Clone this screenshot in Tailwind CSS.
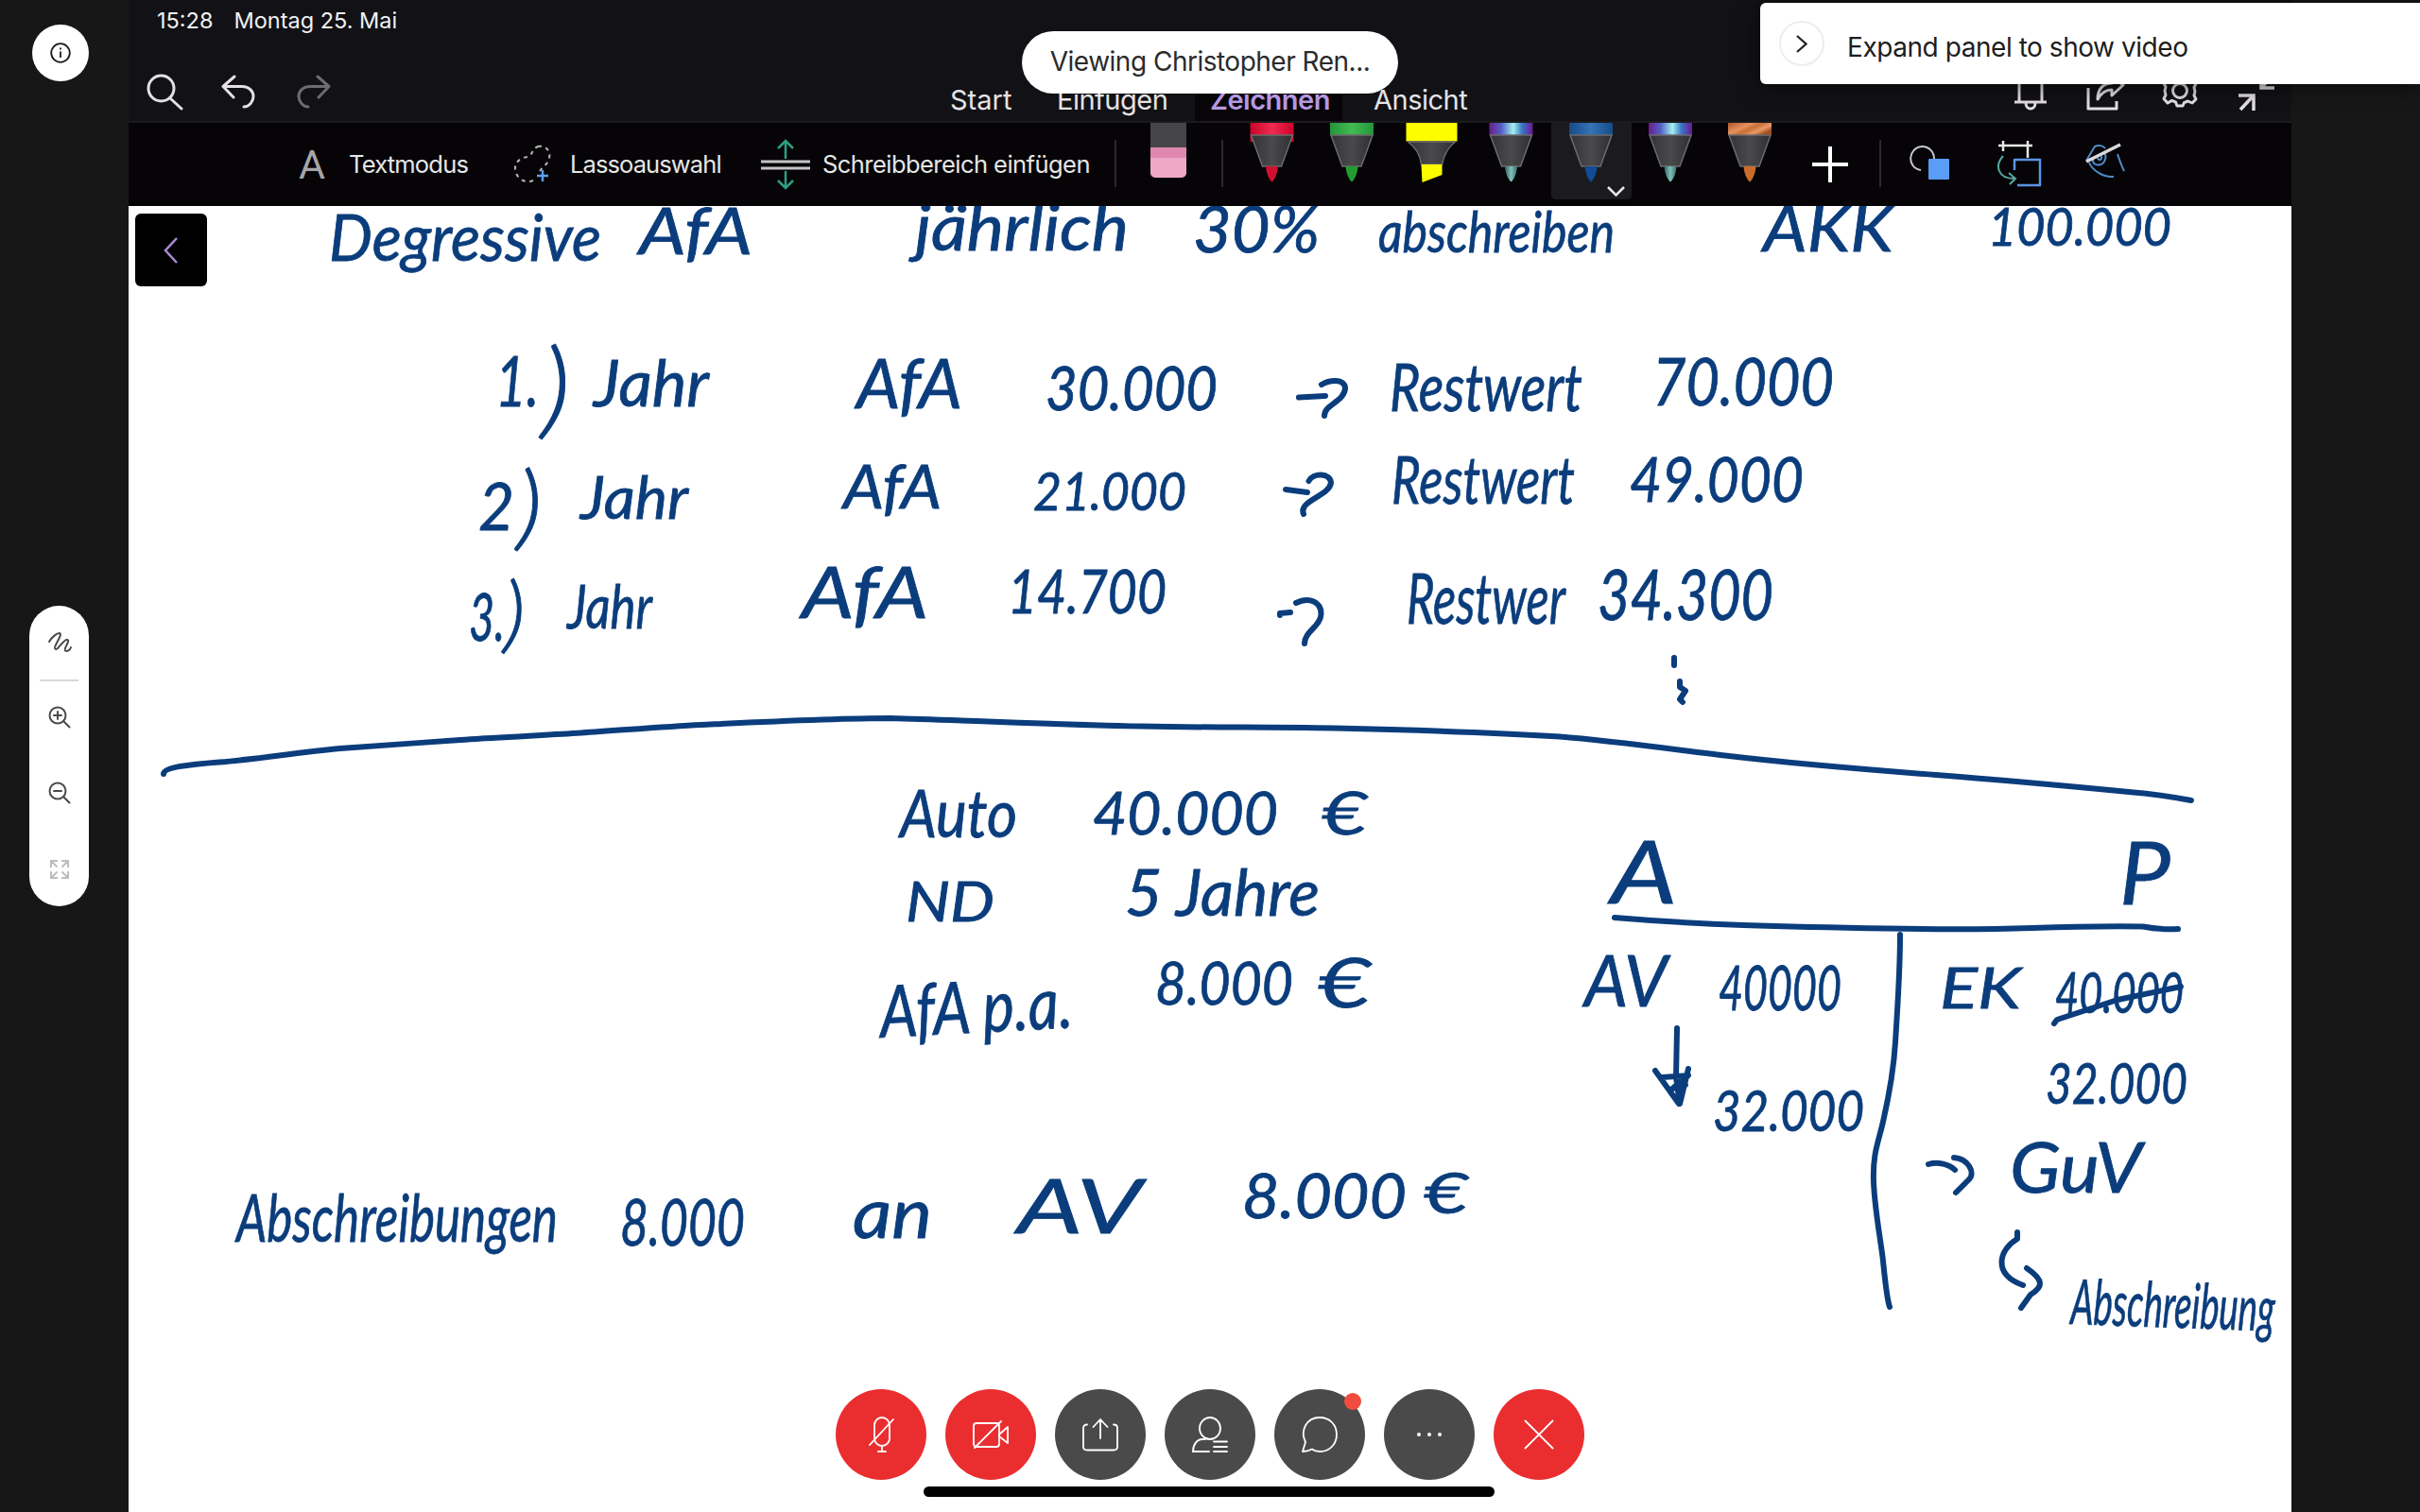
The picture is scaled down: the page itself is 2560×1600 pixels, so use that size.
<!DOCTYPE html>
<html lang="de">
<head>
<meta charset="utf-8">
<title>Meeting</title>
<script src="https://cdn.jsdelivr.net/npm/@tailwindcss/browser@4"></script>
</head>
<body class="bg-[#171717]">
<div class="relative flex h-[1600px] w-[2560px] overflow-hidden bg-[#171717] font-['Inter',sans-serif]">
  <div class="w-[136px] shrink-0"></div>

  <main class="flex w-[2288px] shrink-0 flex-col bg-white">
    <header class="flex h-[128px] shrink-0 flex-col bg-[#121115] text-[#e4e3e6]">
      <div class="flex h-[44px] items-center gap-[22px] pl-[30px] text-[23.5px] leading-none text-[#f2f2f2]">
        <span>15:28</span><span>Montag 25. Mai</span>
      </div>
      <div class="flex h-[84px] items-stretch">
        <div class="flex w-[842px] items-start gap-[40px] pl-[18px] pt-[33px]">
          <svg class="h-[40px] w-[40px]" viewBox="0 0 40 40" fill="none" stroke="#e4e0e6" stroke-width="3" stroke-linecap="round"><circle cx="16.500" cy="16.500" r="13.500"/><path d="M26 27L38 38"/></svg>
          <svg class="h-[40px] w-[38px]" viewBox="0 0 38 40" fill="none" stroke="#e4e0e6" stroke-width="3" stroke-linecap="round" stroke-linejoin="round"><path d="M14 4L2 14.500L13 26M2 14.500H22C30 14.500 34 20 34 25S30 36 24 36"/></svg>
          <svg class="h-[40px] w-[38px]" viewBox="0 0 38 40" fill="none" stroke="#6d6c70" stroke-width="3" stroke-linecap="round" stroke-linejoin="round"><path d="M24 4L36 14.500L25 26M36 14.500H16C8 14.500 4 20 4 25S8 36 14 36"/></svg>
        </div>
        <nav class="flex items-stretch text-[29px] leading-none tracking-[-0.5px]">
          <span class="flex w-[140px] items-center pl-[27px] pt-[38px] tracking-normal">Start</span>
          <span class="flex w-[146px] items-center pt-[38px]">Einfügen</span>
          <span class="flex w-[156px] items-center bg-[#070508] pl-[16px] pt-[38px] font-semibold text-[#b698e2]">Zeichnen</span>
          <span class="flex items-center pl-[33px] pt-[38px]">Ansicht</span>
        </nav>
        <div class="ml-auto flex items-start gap-[38px] pr-[16px] pt-[32px]">
          <svg class="h-[42px] w-[40px]" viewBox="0 0 40 42" fill="none" stroke="#e4e0e6" stroke-width="3"><path d="M8 32V14C8 7 13 3 20 3S32 7 32 14V32M3 32H37M15 33C15 41 25 41 25 33"/></svg>
          <svg class="h-[42px] w-[42px]" viewBox="0 0 42 42" fill="none" stroke="#e4e0e6" stroke-width="3" stroke-linejoin="round"><path d="M3 17V39H33V31M13 29C13 18 19 12 28 12V5L40 14L28 25V19C21 19 17 22 13 29Z"/></svg>
          <svg class="h-[42px] w-[40px]" viewBox="0 0 40 42" fill="none" stroke="#e4e0e6" stroke-width="3"><circle cx="20" cy="20" r="7.500"/><path stroke-linejoin="round" d="M17 4h6l1.500 4.500 4 1.600L33 8l4 4.500-2 4L36 21l-1 4 2 4-4 4-4.500-2-4 1.600L23 36h-6l-1.500-4-4-1.600L7 33l-4-4.500 2-4L4 20l1-4-2-4L7 8l4.500 2 4-1.500Z"/></svg>
          <svg class="h-[42px] w-[44px]" viewBox="0 0 44 42" fill="none" stroke="#e4e0e6" stroke-width="3.500"><path d="M4 25H20V41M20 25L6 40M42 17H28V3M28 17L41 3"/></svg>
        </div>
      </div>
    </header>

    <section class="flex h-[90px] shrink-0 items-stretch border-t-2 border-[#1b1a1d] bg-[#060407] text-[25.5px] leading-none tracking-[-0.7px] text-[#e6e6e6]">
      <div class="flex w-[233px] items-center pl-[180px] font-['Roboto',sans-serif] text-[43px] text-[#a6a5a8]">A</div>
      <div class="flex w-[171px] items-center tracking-[-0.8px]">Textmodus</div>
      <div class="flex w-[63px] items-center">
        <svg class="h-[48px] w-[48px]" viewBox="0 0 48 48" fill="none"><path d="M29 5C37 3 43 10 41 17C39 25 34 26 31 31M24 41C15 45 6 38 5 30C4 21 11 17 18 16C24 14 22 8 29 5" stroke="#b5b5b5" stroke-width="2" stroke-dasharray="4 4.500"/><path d="M34 30V42M28 36H40" stroke="#5c9df0" stroke-width="2.500"/></svg>
      </div>
      <div class="flex w-[200px] items-center tracking-[-0.9px]">Lassoauswahl</div>
      <div class="flex w-[67px] items-center">
        <svg class="h-[58px] w-[56px]" viewBox="0 0 56 58" fill="none"><path d="M2 26H54M2 33H54" stroke="#c4c3c6" stroke-width="3"/><path d="M28 23V4M20 12L28 4L36 12M28 36V54M20 46L28 54L36 46" stroke="#2ba084" stroke-width="2.500"/></svg>
      </div>
      <div class="flex w-[309px] items-center tracking-[-0.55px]">Schreibbereich einfügen</div>
      <div class="mt-[18px] h-[50px] w-[2px] bg-[#2b292d]"></div>
      <div class="ml-[36px] w-[38px]">
        <div class="h-[26px] bg-[#454447]"></div>
        <div class="h-[11px] bg-[#e087b0]"></div>
        <div class="h-[21px] rounded-b-[5px] bg-[#eea8c8]"></div>
      </div>
      <div class="ml-[37px] mt-[18px] h-[50px] w-[2px] bg-[#2b292d]"></div>

      <svg class="h-[88px] w-[597px] shrink-0" viewBox="1293 130 597 88">
        <defs>
          <linearGradient id="body"><stop offset="0" stop-color="#333234"/><stop offset=".5" stop-color="#4a494b"/><stop offset="1" stop-color="#2f2e30"/></linearGradient>
          <linearGradient id="red"><stop stop-color="#c80428"/><stop offset=".5" stop-color="#f02a50"/><stop offset="1" stop-color="#cc0229"/></linearGradient>
          <linearGradient id="green"><stop stop-color="#21963a"/><stop offset=".5" stop-color="#44ba52"/><stop offset="1" stop-color="#22963a"/></linearGradient>
          <linearGradient id="blue"><stop stop-color="#164a88"/><stop offset=".5" stop-color="#3574b6"/><stop offset="1" stop-color="#174b8a"/></linearGradient>
          <linearGradient id="galaxy"><stop stop-color="#6b1c8c"/><stop offset=".28" stop-color="#5361c8"/><stop offset=".55" stop-color="#a5f0ee"/><stop offset=".75" stop-color="#3978c5"/><stop offset="1" stop-color="#6c1594"/></linearGradient>
          <linearGradient id="teal"><stop stop-color="#32656a"/><stop offset=".5" stop-color="#7ec0b4"/><stop offset="1" stop-color="#3e6a76"/></linearGradient>
          <linearGradient id="copper" x2="1" y2=".6"><stop stop-color="#b05426"/><stop offset=".4" stop-color="#e59260"/><stop offset=".6" stop-color="#cb6d36"/><stop offset=".8" stop-color="#e99b6c"/><stop offset="1" stop-color="#a54c20"/></linearGradient>
          <path id="cone" d="M-22 143H22L10 176H-10Z" fill="url(#body)" stroke="#6c6b6e" stroke-width="1.500"/>
          <path id="tip" d="M-6.500 176H6.500C6 184 3 190 0 192.500C-3 190 -6 184 -6.500 176Z"/>
        </defs>
        <path d="M1640 130H1725V206Q1725 211 1720 211H1645Q1640 211 1640 206Z" fill="#1b1a1d"/>
        <g transform="translate(1344.500 0)"><rect x="-23" y="130" width="46" height="20" y2="0" fill="url(#red)"/><use href="#cone"/><use href="#tip" fill="#d01030"/></g>
        <g transform="translate(1429 0)"><rect x="-23" y="130" width="46" height="13" fill="url(#green)"/><use href="#cone"/><use href="#tip" fill="#239a32"/></g>
        <g transform="translate(1513.500 0)"><rect x="-27" y="130" width="54" height="19.500" fill="#fdfd00"/><path d="M-25 150H25C17 156 13 164 11 174H-11C-12 164 -17 156 -25 150Z" fill="url(#body)" stroke="#6c6b6e" stroke-width="1.500"/><path d="M-11 174H11V185L-10 193Z" fill="#fdfd00"/></g>
        <g transform="translate(1597.500 0)"><rect x="-23" y="130" width="46" height="13" fill="url(#galaxy)"/><use href="#cone"/><use href="#tip" fill="url(#teal)"/></g>
        <g transform="translate(1682 0)"><rect x="-23" y="130" width="46" height="13" fill="url(#blue)"/><use href="#cone"/><use href="#tip" fill="#114c94"/></g>
        <path d="M1700 198L1708.500 206.500L1717 198" fill="none" stroke="#e8e8e8" stroke-width="2.500"/>
        <g transform="translate(1766 0)"><rect x="-23" y="130" width="46" height="13" fill="url(#galaxy)"/><use href="#cone"/><use href="#tip" fill="url(#teal)"/></g>
        <g transform="translate(1850 0)"><rect x="-23" y="130" width="46" height="13" fill="url(#copper)"/><use href="#cone"/><use href="#tip" fill="#cb6c2c"/></g>
      </svg>
      <div class="ml-[25px] flex w-[40px] items-center">
        <svg class="h-[40px] w-[40px] shrink-0" viewBox="0 0 40 40" stroke="#fff" stroke-width="4"><path d="M20 1V39M1 20H39"/></svg>
      </div>
      <div class="ml-[32px] mt-[18px] h-[50px] w-[2px] bg-[#2b292d]"></div>
      <svg class="ml-[30px] mt-[22px] h-[42px] w-[46px]" viewBox="0 0 46 42" fill="none"><path d="M12 28C-4 25 -1 4 13 3C21 3 26 9 26 16" stroke="#c9c8cb" stroke-width="2"/><rect x="20" y="16" width="22" height="22" rx="1" fill="#5b9cf6"/></svg>
      <svg class="ml-[45px] mt-[17px] h-[52px] w-[50px]" viewBox="0 0 50 52" fill="none"><path d="M3 7H39M8 2V13M34 2V20" stroke="#e8e8e8" stroke-width="2.500"/><path d="M8 18C-1 28 2 42 20 42M14 36L21 42L15 48" stroke="#58a8a0" stroke-width="2"/><path d="M20 33V22H47V49H23" stroke="#5b94e6" stroke-width="2.500" stroke-linejoin="round"/></svg>
      <svg class="ml-[44px] mt-[21px] h-[40px] w-[46px]" viewBox="0 0 46 40" fill="none"><path d="M2 19L11 4C15 2 20 3 22 6M35 12C37 18 39 24 42 30M5 21C8 29 20 37 31 36M9 17C8 24 17 26 21 20C23 16 23 13 21 11M14 16C15 20 19 18 18 14" stroke="#4f8cc8" stroke-width="2"/><path d="M2 20L38 2" stroke="#d9d9dc" stroke-width="3.500"/></svg>
    </section>

    <!-- Notebook page: ink on a free canvas -->
    <section class="relative min-h-0 flex-1 overflow-hidden bg-white">
      <svg class="block h-[1382px] w-[2288px]" viewBox="136 218 2288 1382">
        <g class="font-['Lato',sans-serif] italic" fill="#0b3d7c" stroke="#0b3d7c" stroke-width="0.800">
          <g font-size="68">
            <text x="348" y="276" textLength="288" lengthAdjust="spacingAndGlyphs">Degressive</text>
            <text x="676" y="269" textLength="120" lengthAdjust="spacingAndGlyphs">AfA</text>
            <text x="968" y="265" textLength="226" lengthAdjust="spacingAndGlyphs">jährlich</text>
            <text x="1262" y="267" textLength="134" lengthAdjust="spacingAndGlyphs">30%</text>
            <text x="1458" y="267" font-size="60" textLength="250" lengthAdjust="spacingAndGlyphs">abschreiben</text>
            <text x="1865" y="266" textLength="138" lengthAdjust="spacingAndGlyphs">AKK</text>
            <text x="2103" y="260" font-size="56" textLength="194" lengthAdjust="spacingAndGlyphs">100.000</text>

            <text x="524" y="430" font-size="74" textLength="46" lengthAdjust="spacingAndGlyphs">1.</text>
            <text x="572" y="450" class="font-light" font-size="112" textLength="32" lengthAdjust="spacingAndGlyphs">)</text>
            <text x="628" y="430" textLength="122" lengthAdjust="spacingAndGlyphs">Jahr</text>
            <text x="906" y="432" font-size="72" textLength="112" lengthAdjust="spacingAndGlyphs">AfA</text>
            <text x="1106" y="434" font-size="64" textLength="182" lengthAdjust="spacingAndGlyphs">30.000</text>
            <text x="1470" y="435" font-size="70" textLength="204" lengthAdjust="spacingAndGlyphs">Restwert</text>
            <text x="1748" y="429" font-size="70" textLength="192" lengthAdjust="spacingAndGlyphs">70.000</text>

            <text x="506" y="561" font-size="70" textLength="38" lengthAdjust="spacingAndGlyphs">2</text>
            <text x="546" y="570" class="font-light" font-size="98" textLength="28" lengthAdjust="spacingAndGlyphs">)</text>
            <text x="614" y="549" font-size="62" textLength="114" lengthAdjust="spacingAndGlyphs">Jahr</text>
            <text x="892" y="538" font-size="64" textLength="104" lengthAdjust="spacingAndGlyphs">AfA</text>
            <text x="1093" y="540" font-size="56" textLength="162" lengthAdjust="spacingAndGlyphs">21.000</text>
            <text x="1472" y="533" font-size="70" textLength="194" lengthAdjust="spacingAndGlyphs">Restwert</text>
            <text x="1724" y="531" font-size="66" textLength="184" lengthAdjust="spacingAndGlyphs">49.000</text>

            <text x="496" y="678" font-size="70" textLength="38" lengthAdjust="spacingAndGlyphs">3.</text>
            <text x="532" y="680" class="font-light" font-size="88" textLength="24" lengthAdjust="spacingAndGlyphs">)</text>
            <text x="600" y="665" font-size="64" textLength="90" lengthAdjust="spacingAndGlyphs">Jahr</text>
            <text x="848" y="654" font-size="76" textLength="134" lengthAdjust="spacingAndGlyphs">AfA</text>
            <text x="1066" y="649" font-size="64" textLength="168" lengthAdjust="spacingAndGlyphs">14.700</text>
            <text x="1488" y="660" font-size="74" textLength="168" lengthAdjust="spacingAndGlyphs">Restwer</text>
            <text x="1690" y="656" font-size="74" textLength="186" lengthAdjust="spacingAndGlyphs">34.300</text>

            <text x="952" y="886" font-size="70" textLength="124" lengthAdjust="spacingAndGlyphs">Auto</text>
            <text x="1156" y="883" font-size="62" textLength="196" lengthAdjust="spacingAndGlyphs">40.000</text>
            <text x="1398" y="883" font-size="62" textLength="48" lengthAdjust="spacingAndGlyphs">€</text>
            <text x="958" y="975" font-size="58" textLength="94" lengthAdjust="spacingAndGlyphs">ND</text>
            <text x="1190" y="969" font-size="68" textLength="206" lengthAdjust="spacingAndGlyphs">5 Jahre</text>
            <text transform="translate(932 1098) rotate(-3)" font-size="76" textLength="204" lengthAdjust="spacingAndGlyphs">AfA p.a.</text>
            <text x="1222" y="1063" font-size="62" textLength="146" lengthAdjust="spacingAndGlyphs">8.000</text>
            <text x="1394" y="1066" font-size="72" textLength="56" lengthAdjust="spacingAndGlyphs">€</text>

            <text x="250" y="1314" font-size="70" textLength="340" lengthAdjust="spacingAndGlyphs">Abschreibungen</text>
            <text x="656" y="1318" font-size="68" textLength="132" lengthAdjust="spacingAndGlyphs">8.000</text>
            <text x="902" y="1310" font-size="74" textLength="84" lengthAdjust="spacingAndGlyphs">an</text>
            <text x="1076" y="1305" font-size="80" textLength="132" lengthAdjust="spacingAndGlyphs">AV</text>
            <text x="1314" y="1289" font-size="66" textLength="174" lengthAdjust="spacingAndGlyphs">8.000</text>
            <text x="1506" y="1284" font-size="60" textLength="47" lengthAdjust="spacingAndGlyphs">€</text>

            <text x="1704" y="956" font-size="92" textLength="70" lengthAdjust="spacingAndGlyphs">A</text>
            <text x="2242" y="957" font-size="92" textLength="54" lengthAdjust="spacingAndGlyphs">P</text>
            <text x="1676" y="1065" font-size="76" textLength="88" lengthAdjust="spacingAndGlyphs">AV</text>
            <text x="1818" y="1069" font-size="66" textLength="130" lengthAdjust="spacingAndGlyphs">40000</text>
            <text x="1812" y="1197" font-size="60" textLength="160" lengthAdjust="spacingAndGlyphs">32.000</text>
            <text x="2052" y="1067" font-size="60" textLength="86" lengthAdjust="spacingAndGlyphs">EK</text>
            <text x="2174" y="1072" font-size="60" textLength="136" lengthAdjust="spacingAndGlyphs">40.000</text>
            <text x="2164" y="1168" font-size="60" textLength="150" lengthAdjust="spacingAndGlyphs">32.000</text>
            <text x="2126" y="1262" font-size="74" textLength="140" lengthAdjust="spacingAndGlyphs">GuV</text>
            <text transform="translate(2190 1401) rotate(2)" font-size="66" textLength="216" lengthAdjust="spacingAndGlyphs">Abschreibung</text>
          </g>
        </g>
        <g fill="none" stroke="#0b3d7c" stroke-width="6" stroke-linecap="round" stroke-linejoin="round">
          <path d="M173 819C173 812 200 809 232 806.500C275 803 315 796 360 792C400 789 445 786 487 783S575 778 615 775.500S700 769 742 767S880 760 942 760C1020 762 1120 767 1207 768.600S1340 769 1411 770.600S1560 774 1650 779.600C1705 784 1770 793 1829 800S1970 814 2048 820S2190 832 2252 838Q2288 841 2318 847"/>
          <path d="M1708 971Q1780 977 1844 979T1997 982.600T2150 982T2267 980.500Q2285 984 2304 983"/>
          <path d="M2010 989C2010 1030 2007 1070 2005 1103S1997 1165 1992 1187S1981 1220 1982 1250S1990 1315 1992 1334.500S1996 1375 1999 1383"/>
          <path d="M2173 1083L2176 1079L2240 1058L2307 1044"/>
          <path d="M1774 1088L1773 1140L1777 1168L1786 1131M1751 1133L1776 1168M1758 1140L1786 1138L1769 1152L1783 1148"/>
          <path d="M1374 420.500L1402 419M1398 407C1406 402 1423 400 1423 411C1422 425 1401 428 1401 440"/>
          <path d="M1360 518L1383 521M1384.500 509C1389 500 1407 500 1408 511C1406 525 1373 530 1379 544"/>
          <path d="M1354 651V649L1365 648M1371 638C1385 631 1398 637 1397.500 650C1397 663 1380 668 1380 681"/>
          <path d="M2040 1232C2050 1229 2062 1232 2068 1238M2067 1225C2082 1226 2090 1241 2083 1248L2069 1262"/>
          <path d="M2134 1304V1311C2115 1322 2107 1348 2140 1360M2144 1342C2163 1355 2161 1362 2148 1370L2138 1384"/>
          <path d="M1771 696V704M1777 721V727L1783 731L1777 740L1780 743"/>
        </g>
      </svg>
      <div class="absolute left-[7px] top-[8px] flex h-[77px] w-[76px] items-center justify-center rounded-[6px] bg-black">
        <svg class="h-[28px] w-[16px]" viewBox="0 0 16 28" fill="none" stroke="#a98bd2" stroke-width="2.500"><path d="M14 1L2 14L14 27"/></svg>
      </div>
      <div class="absolute left-[841px] top-[1355px] h-[11px] w-[604px] rounded-full bg-black"></div>
    </section>
  </main>

  <div class="absolute left-[34px] top-[26px] flex size-[60px] items-center justify-center rounded-full bg-white">
    <svg class="size-[22px]" viewBox="0 0 22 22" fill="none" stroke="#1c1c1c" stroke-width="1.800"><circle cx="11" cy="11" r="9.800"/><path d="M11 9.500V16M11 5.500V7.500"/></svg>
  </div>

  <div class="absolute left-[31px] top-[641px] flex h-[318px] w-[63px] flex-col items-center rounded-full bg-white">
    <svg class="mt-[27px] h-[24px] w-[28px]" viewBox="0 0 28 24" fill="none" stroke="#4a4a4a" stroke-width="2" stroke-linecap="round"><path d="M3 11C6 6 11 2 14 2C18 3 8 15 9 18C11 23 18 8 22 9C26 10 18 18 20 20.500C22 22 25 20 26 17"/></svg>
    <div class="mt-[27px] h-[2px] w-[41px] bg-[#d8d8d8]"></div>
    <svg class="mt-[26px] ml-[1px] size-[24px]" viewBox="0 0 24 24" fill="none" stroke="#4a4a4a" stroke-width="2" stroke-linecap="round"><circle cx="10" cy="10" r="8.500"/><path d="M16.500 16.500L22.500 22.500M10 6V14M6 10H14"/></svg>
    <svg class="mt-[56px] ml-[1px] size-[24px]" viewBox="0 0 24 24" fill="none" stroke="#4a4a4a" stroke-width="2" stroke-linecap="round"><circle cx="10" cy="10" r="8.500"/><path d="M16.500 16.500L22.500 22.500M6 10H14"/></svg>
    <svg class="mt-[58px] size-[22px]" viewBox="0 0 22 22" fill="none" stroke="#bdbdbd" stroke-width="2"><path d="M2 9V2H9M2 2L8.500 8.500M13 2H20V9M20 2L13.500 8.500M2 13V20H9M2 20L8.500 13.500M20 13V20H13M20 20L13.500 13.500"/></svg>
  </div>

  <div class="absolute left-[1081px] top-[33px] flex h-[66px] w-[398px] items-center justify-center rounded-full bg-white pb-[3px] text-[28px] leading-none tracking-[-0.5px] text-[#2b2b2b]">
    <span class="whitespace-nowrap">Viewing Christopher Ren...</span>
  </div>

  <div class="absolute left-[1862px] top-[3px] flex h-[86px] w-[698px] items-center rounded-l-[6px] bg-white pl-[20px] text-[28px] leading-none tracking-[-0.45px] text-[#1d1d1d] shadow-[0_2px_24px_rgba(0,0,0,0.6)]">
    <div class="flex size-[48px] items-center justify-center rounded-full border-2 border-[#ededed]">
      <svg class="h-[19px] w-[12px]" viewBox="0 0 12 19" fill="none" stroke="#222" stroke-width="2.200"><path d="M1 1L10.500 9.500L1 18"/></svg>
    </div>
    <span class="whitespace-nowrap pl-[24px] pt-[8px]">Expand panel to show video</span>
  </div>

  <div class="absolute left-[884px] top-[1470px] flex gap-[20px]">
    <div class="flex size-[96px] items-center justify-center rounded-full bg-[#ea2e30]">
      <svg class="size-[40px]" viewBox="0 0 40 40" fill="none" stroke="#fff" stroke-width="1.800" stroke-linecap="round"><rect x="13" y="2" width="16" height="30" rx="8"/><path d="M21 32V38M17 38H25M33 4L8 31"/></svg>
    </div>
    <div class="flex size-[96px] items-center justify-center rounded-full bg-[#ea2e30]">
      <svg class="size-[40px]" viewBox="0 0 40 40" fill="none" stroke="#fff" stroke-width="1.800" stroke-linecap="round" stroke-linejoin="round"><rect x="2" y="8" width="27" height="25" rx="3"/><path d="M29 20L38 12V29L29 22M31 6L3 34"/></svg>
    </div>
    <div class="flex size-[96px] items-center justify-center rounded-full bg-[#4a4a4a]">
      <svg class="size-[40px]" viewBox="0 0 40 40" fill="none" stroke="#fff" stroke-width="1.800" stroke-linecap="round"><path d="M6 9.500Q2 9.500 2 13V33Q2 36.500 6 36.500H34Q38 36.500 38 33V13Q38 9.500 34 9.500M20 24V4M12.500 12L20 4L27.500 12"/></svg>
    </div>
    <div class="flex size-[96px] items-center justify-center rounded-full bg-[#4a4a4a]">
      <svg class="size-[40px]" viewBox="0 0 40 40" fill="none" stroke="#fff" stroke-width="1.800" stroke-linecap="round"><ellipse cx="20" cy="13.500" rx="11" ry="11.500"/><path d="M19 38H2C2 31 6 25 12 25Q15 25 17 24.500M24 27.500H38M24 33H38M24 38H38"/></svg>
    </div>
    <div class="relative flex size-[96px] items-center justify-center rounded-full bg-[#4a4a4a]">
      <svg class="size-[40px]" viewBox="0 0 40 40" fill="none" stroke="#fff" stroke-width="1.800" stroke-linejoin="round"><path d="M2 38L5 28C-1 16 6 2 20 2C31 2 38 10 38 20S31 38 20 38Q15 38 12 35.500Q7 38 2 38Z"/></svg>
      <div class="absolute left-[74px] top-[4px] size-[18px] rounded-full bg-[#f24c41]"></div>
    </div>
    <div class="flex size-[96px] items-center justify-center gap-[7px] rounded-full bg-[#4a4a4a]">
      <i class="size-[4px] rounded-full bg-white"></i><i class="size-[4px] rounded-full bg-white"></i><i class="size-[4px] rounded-full bg-white"></i>
    </div>
    <div class="flex size-[96px] items-center justify-center rounded-full bg-[#ea2e30]">
      <svg class="size-[32px]" viewBox="0 0 32 32" fill="none" stroke="#fff" stroke-width="1.800" stroke-linecap="round"><path d="M1.500 1.500L30.500 30.500M30.500 1.500L1.500 30.500"/></svg>
    </div>
  </div>
</div>
</body>
</html>
